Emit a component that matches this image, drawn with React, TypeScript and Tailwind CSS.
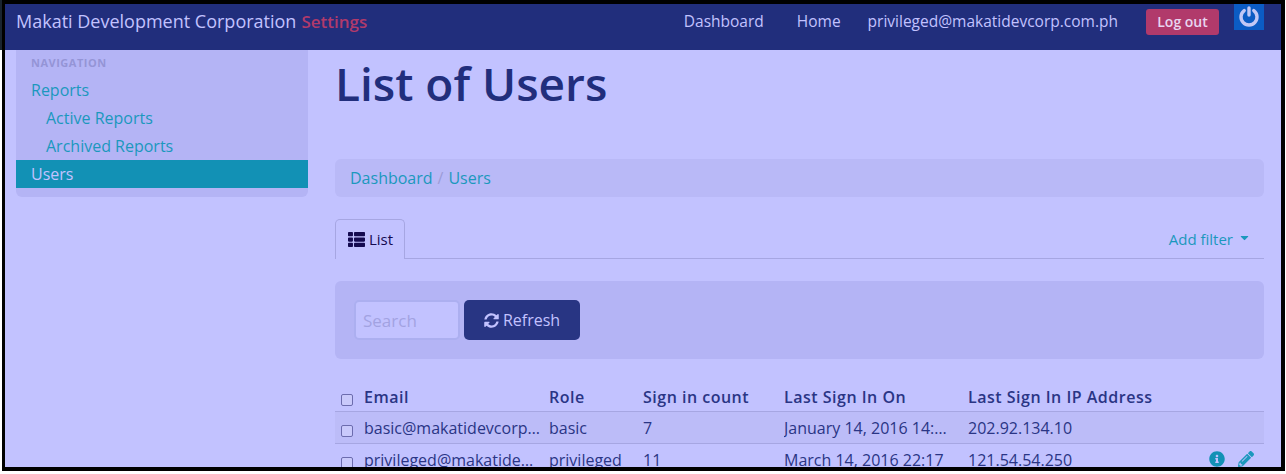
import React from 'react';
import { FaThList, FaSyncAlt, FaInfoCircle, FaPencilAlt, FaCaretDown } from 'react-icons/fa';

const rows = [
  { email: 'basic@makatidevcorp.com.ph', role: 'basic', count: '7', last: 'January 14, 2016 14:32', ip: '202.92.134.10', striped: true, actions: false },
  { email: 'privileged@makatidevcorp.com.ph', role: 'privileged', count: '11', last: 'March 14, 2016 22:17', ip: '121.54.54.250', striped: false, actions: true },
];

function Navbar() {
  return (
    <header className="h-[46px] shrink-0 bg-[#212e7c] flex items-start text-[#c2c2ff]">
      <div className="pl-[11px] pt-[4px] flex items-baseline gap-[5px] text-[18px] leading-[26px]">
        <span>Makati Development Corporation</span>
        <span className="text-[17px] font-semibold text-[#b13a6b]">Settings</span>
      </div>
      <nav className="ml-auto flex items-start text-[15.5px] leading-[22px] pt-[6px]">
        <a className="mr-[33px]">Dashboard</a>
        <a className="mr-[27px]">Home</a>
        <a className="mr-[28px]">privileged@makatidevcorp.com.ph</a>
        <button className="h-[26px] w-[73px] -mt-[1px] mr-[15px] rounded-[3px] bg-[#b13a6b] text-[14px] font-semibold text-[#e8d5f0]">Log out</button>
      </nav>
      <div className="w-[30px] h-[28px] -mt-[2px] mr-[17px] bg-[#0b5cc4] flex items-center justify-center">
        <svg viewBox="0 0 24 24" width="24" height="24" fill="none" stroke="#c2c8f5" strokeWidth="3.4" strokeLinecap="round">
          <path d="M12 4v7" />
          <path d="M7.2 6.6a8 8 0 1 0 9.6 0" />
        </svg>
      </div>
    </header>
  );
}

function Sidebar() {
  return (
    <aside className="w-[292px] ml-[11px] shrink-0">
      <div className="bg-[#b4b4f5] rounded-b-[6px] pb-[9px]">
        <div className="h-[26px] pl-[15px] text-[11px] font-bold tracking-[0.5px] leading-[25px] text-[#9494d6]">NAVIGATION</div>
        <ul className="text-[16px] leading-[28px] text-[#1b98bd]">
          <li className="pl-[15px]">Reports</li>
          <li className="pl-[30px]">Active Reports</li>
          <li className="pl-[30px]">Archived Reports</li>
          <li className="pl-[15px] bg-[#1291b5] text-[#c2c2ff]">Users</li>
        </ul>
      </div>
    </aside>
  );
}

function UsersTable() {
  return (
    <table className="w-[929px] table-fixed border-collapse text-[16px] text-[#2a3585]">
      <colgroup>
        <col className="w-[29px]" />
        <col className="w-[185px]" />
        <col className="w-[94px]" />
        <col className="w-[141px]" />
        <col className="w-[184px]" />
        <col className="w-[226px]" />
        <col />
      </colgroup>
      <thead>
        <tr className="h-[31px] text-left tracking-[0.5px]">
          <th className="pl-[6px] align-bottom pb-[6px]"><span className="block w-[12px] h-[12px] rounded-[2px] border border-[#6c6cae] bg-[#c9c9fb] translate-y-[1px]" /></th>
          <th className="pb-[2px] align-bottom font-semibold">Email</th>
          <th className="pb-[2px] align-bottom font-semibold">Role</th>
          <th className="pb-[2px] align-bottom font-semibold">Sign in count</th>
          <th className="pb-[2px] align-bottom font-semibold">Last Sign In On</th>
          <th colSpan={2} className="pb-[2px] align-bottom font-semibold">Last Sign In IP Address</th>
        </tr>
      </thead>
      <tbody>
        {rows.map((r) => (
          <tr key={r.email} className={`h-[32px] border-t border-[#a6a6e2] ${r.striped ? 'bg-[#bcbcf8]' : ''}`}>
            <td className="pl-[6px]"><span className="block w-[12px] h-[12px] rounded-[2px] border border-[#6c6cae] bg-[#c9c9fb] translate-y-[4px]" /></td>
            <td className="pr-[8px] pt-[1px] truncate">{r.email}</td>
            <td className="pt-[1px] truncate">{r.role}</td>
            <td className="pt-[1px]">{r.count}</td>
            <td className="pr-[18px] pt-[1px] truncate">{r.last}</td>
            <td className="pt-[1px]">{r.ip}</td>
            <td>
              {r.actions && (
                <div className="flex justify-end items-center gap-[13px] pr-[10px]">
                  <FaInfoCircle className="text-[16px] text-[#1291b5]" />
                  <FaPencilAlt className="text-[16px] text-[#1b98bd]" />
                </div>
              )}
            </td>
          </tr>
        ))}
      </tbody>
    </table>
  );
}

function Content() {
  return (
    <main className="ml-[27px] w-[929px] shrink-0">
      <h1 className="text-[46px] leading-[52px] font-semibold text-[#212e7c] pt-[7px] h-[109px]">List of Users</h1>
      <div className="h-[38px] rounded-[6px] bg-[#b9b9f7] pl-[15px] flex items-center text-[16px] text-[#1b98bd]">
        <span>Dashboard</span>
        <span className="px-[5px] text-[#9c9cd8]">/</span>
        <span>Users</span>
      </div>
      <div className="mt-[22px] h-[40px] flex items-end border-b border-[#a6a6e2]">
        <div className="h-[40px] w-[70px] -mb-px pl-[12px] flex items-center gap-[4px] rounded-t-[5px] border border-b-0 border-[#a6a6e2] bg-[#c2c2ff] text-[15px] text-[#140a50]">
          <FaThList className="text-[17px]" />
          <span>List</span>
        </div>
        <div className="ml-auto h-full pt-[2px] flex items-center gap-[5px] pr-[13px] text-[15px] text-[#1b98bd]">
          <span>Add filter</span>
          <FaCaretDown className="text-[13px] -mt-[4px]" />
        </div>
      </div>
      <div className="mt-[22px] h-[78px] rounded-[6px] bg-[#b4b4f5] pl-[19px] flex items-center gap-[4px]">
        <input
          placeholder="Search"
          className="w-[106px] h-[40px] rounded-[5px] border-2 border-[#acaff0] bg-[#c2c2ff] px-[7px] text-[17px] placeholder:text-[#a2a2e2] outline-none"
        />
        <button className="w-[116px] h-[40px] rounded-[5px] bg-[#283583] flex items-center justify-center gap-[4px] text-[16px] text-[#c2c2ff]">
          <FaSyncAlt className="text-[15px]" />
          <span>Refresh</span>
        </button>
      </div>
      <div className="mt-[21px]">
        <UsersTable />
      </div>
    </main>
  );
}

export default function App() {
  return (
    <div className="relative w-[1286px] h-[474px] bg-white overflow-hidden font-['Open_Sans',sans-serif]">
      <div className="absolute left-0 top-0 w-[2px] h-[50px] bg-[#1a2430]" />
      <div className="ml-[2px] w-[1283px] h-[471px] border-solid border-black border-t-[4px] border-l-[3px] border-r-[4px] border-b-[4px] bg-[#c2c2ff] overflow-hidden flex flex-col">
        <Navbar />
        <div className="flex flex-1">
          <Sidebar />
          <Content />
        </div>
      </div>
    </div>
  );
}
